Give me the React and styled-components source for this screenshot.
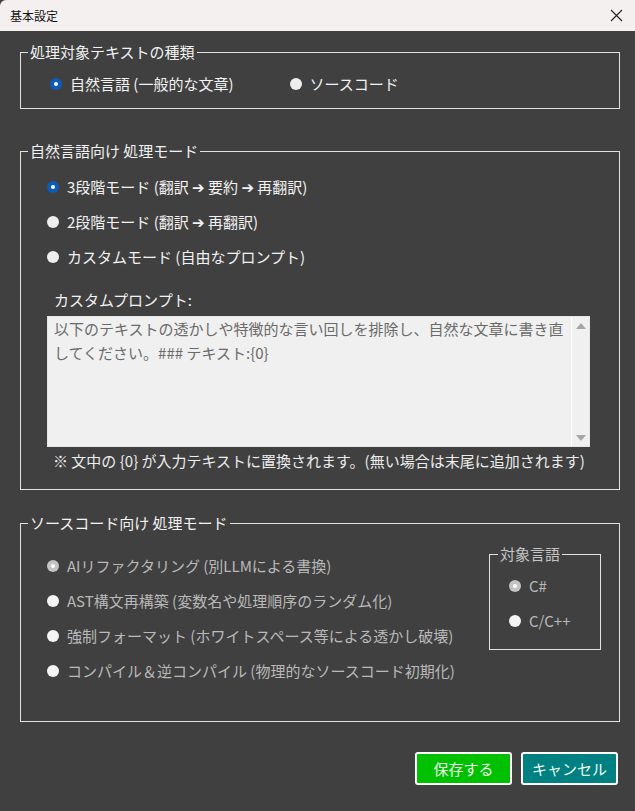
import React, { useState } from "react";
import styled, { createGlobalStyle } from "styled-components";

const GlobalStyle = createGlobalStyle`
  html, body {
    margin: 0;
    padding: 0;
    background: #404040;
  }
  * {
    box-sizing: border-box;
  }
`;

const FONT = `"Noto Sans CJK JP", "DejaVu Sans", sans-serif`;

function App() {
  const [textKind, setTextKind] = useState("natural");
  const [mode, setMode] = useState("three");
  const [prompt] = useState(
    "以下のテキストの透かしや特徴的な言い回しを排除し、自然な文章に書き直してください。### テキスト:{0}"
  );

  return (
    <Window>
      <GlobalStyle />
      <TitleBar>
        <Title>基本設定</Title>
        <CloseButton>
          <svg width="13" height="13" viewBox="0 0 13 13">
            <path d="M1 1 L12 12 M12 1 L1 12" stroke="#222" strokeWidth="1.1" />
          </svg>
        </CloseButton>
      </TitleBar>

      <Body>
        <Group $top={11} $pad="12px 0 14px 0">
          <Legend>処理対象テキストの種類</Legend>
          <GroupContent $inset={29}>
            <InlineOptions>
              <Option onClick={() => setTextKind("natural")}>
                <Radio $checked={textKind === "natural"} />
                自然言語 (一般的な文章)
              </Option>
              <Option onClick={() => setTextKind("source")}>
                <Radio $checked={textKind === "source"} />
                ソースコード
              </Option>
            </InlineOptions>
          </GroupContent>
        </Group>

        <Group $top={32} $pad="16px 0 18px 0">
          <Legend>自然言語向け 処理モード</Legend>
          <GroupContent $inset={26}>
            <OptionList $gap={15}>
              <Option onClick={() => setMode("three")}>
                <Radio $checked={mode === "three"} />
                3段階モード (翻訳 ➔ 要約 ➔ 再翻訳)
              </Option>
              <Option onClick={() => setMode("two")}>
                <Radio $checked={mode === "two"} />
                2段階モード (翻訳 ➔ 再翻訳)
              </Option>
              <Option onClick={() => setMode("custom")}>
                <Radio $checked={mode === "custom"} />
                カスタムモード (自由なプロンプト)
              </Option>
            </OptionList>
            <FieldLabel>カスタムプロンプト:</FieldLabel>
            <PromptBox>
              <PromptText>{prompt}</PromptText>
              <ScrollTrack>
                <Arrow $dir="up" />
                <Arrow $dir="down" />
              </ScrollTrack>
            </PromptBox>
            <Note>※ 文中の {"{0}"} が入力テキストに置換されます。(無い場合は末尾に追加されます)</Note>
          </GroupContent>
        </Group>

        <Group $top={23} $pad="23px 0 40px 0">
          <Legend>ソースコード向け 処理モード</Legend>
          <GroupContent $inset={26}>
            <SourceRow>
              <OptionList $gap={15}>
                <Option $disabled>
                  <Radio $checked $disabled />
                  AIリファクタリング (別LLMによる書換)
                </Option>
                <Option $disabled>
                  <Radio $disabled />
                  AST構文再構築 (変数名や処理順序のランダム化)
                </Option>
                <Option $disabled>
                  <Radio $disabled />
                  強制フォーマット (ホワイトスペース等による透かし破壊)
                </Option>
                <Option $disabled>
                  <Radio $disabled />
                  コンパイル＆逆コンパイル (物理的なソースコード初期化)
                </Option>
              </OptionList>
              <SubGroup>
                <SubLegend>対象言語</SubLegend>
                <GroupContent $inset={19}>
                  <OptionList $gap={15}>
                    <Option $disabled>
                      <Radio $checked $disabled />
                      C#
                    </Option>
                    <Option $disabled>
                      <Radio $disabled />
                      C/C++
                    </Option>
                  </OptionList>
                </GroupContent>
              </SubGroup>
            </SourceRow>
          </GroupContent>
        </Group>

        <ButtonRow>
          <ActionButton $bg="#00c000">保存する</ActionButton>
          <ActionButton $bg="#008080">キャンセル</ActionButton>
        </ButtonRow>
      </Body>
    </Window>
  );
}

const Window = styled.div`
  width: 635px;
  height: 811px;
  background: #404040;
  font-family: ${FONT};
  overflow: hidden;
`;

const TitleBar = styled.div`
  height: 31px;
  background: #f4f0f0;
  display: flex;
  align-items: center;
  justify-content: space-between;
  padding: 0 4px 0 10px;
  border-top-left-radius: 6px;
`;

const Title = styled.div`
  font-size: 12px;
  color: #111;
`;

const CloseButton = styled.div`
  width: 30px;
  display: flex;
  align-items: center;
  justify-content: center;
`;

const Body = styled.div`
  padding: 0 15px 0 20px;
`;

const Group = styled.fieldset`
  margin: ${(p) => p.$top}px 0 0 0;
  padding: ${(p) => p.$pad};
  border: 1px solid #e2e2e2;
  min-width: 0;
`;

const GroupContent = styled.div`
  padding-left: ${(p) => p.$inset}px;
`;

const Legend = styled.legend`
  margin-left: 7px;
  padding: 0 2px;
  font-size: 15px;
  line-height: 20px;
  color: #f2f2f2;
`;

const InlineOptions = styled.div`
  display: flex;
  gap: 56px;
`;

const OptionList = styled.div`
  display: flex;
  flex-direction: column;
  gap: ${(p) => p.$gap}px;
`;

const Option = styled.label`
  display: flex;
  align-items: center;
  gap: 8px;
  height: 20px;
  font-size: 15px;
  line-height: 20px;
  white-space: nowrap;
  color: ${(p) => (p.$disabled ? "#b9b9b9" : "#f2f2f2")};
  cursor: ${(p) => (p.$disabled ? "default" : "pointer")};
`;

const Radio = styled.span`
  flex: none;
  width: 12px;
  height: 12px;
  border-radius: 50%;
  position: relative;
  background: ${(p) =>
    p.$checked ? (p.$disabled ? "#c4c4c4" : "#0a5cb8") : p.$disabled ? "#f4f4f4" : "#eeeeee"};
  &::after {
    content: "";
    display: ${(p) => (p.$checked ? "block" : "none")};
    position: absolute;
    left: 4px;
    top: 4px;
    width: 4px;
    height: 4px;
    border-radius: 50%;
    background: #ffffff;
  }
`;

const FieldLabel = styled.div`
  margin: 23px 0 0 7px;
  font-size: 15px;
  line-height: 20px;
  color: #f2f2f2;
`;

const PromptBox = styled.div`
  margin-top: 6px;
  width: 543px;
  height: 131px;
  display: flex;
  background: #f0f0f0;
  border: 1px solid #e6e6e6;
`;

const PromptText = styled.div`
  flex: 1;
  padding: 0 6px;
  font-size: 15px;
  line-height: 24px;
  color: #6a6a6a;
`;

const ScrollTrack = styled.div`
  width: 18px;
  border-left: 1px solid #ffffff;
  display: flex;
  flex-direction: column;
  justify-content: space-between;
  align-items: center;
  padding: 6px 0 5px;
`;

const Arrow = styled.span`
  width: 0;
  height: 0;
  border-left: 5px solid transparent;
  border-right: 5px solid transparent;
  ${(p) =>
    p.$dir === "up"
      ? "border-bottom: 6px solid #a6a6a6;"
      : "border-top: 6px solid #a6a6a6;"}
`;

const Note = styled.div`
  margin: 4px 0 0 6px;
  font-size: 15px;
  line-height: 20px;
  color: #ececec;
  white-space: nowrap;
`;

const SourceRow = styled.div`
  display: flex;
  justify-content: space-between;
  align-items: flex-start;
  padding-right: 18px;
`;

const SubGroup = styled.fieldset`
  margin: -12px 0 0 0;
  width: 112px;
  height: 106px;
  padding: 12px 0 0 0;
  border: 1px solid #e2e2e2;
`;

const SubLegend = styled.legend`
  margin-left: 8px;
  padding: 0 2px;
  font-size: 15px;
  line-height: 20px;
  color: #c4c4c4;
`;

const ButtonRow = styled.div`
  margin-top: 30px;
  padding-right: 2px;
  display: flex;
  justify-content: flex-end;
  gap: 9px;
`;

const ActionButton = styled.button`
  width: 97px;
  height: 33px;
  border: 2px solid #ffffff;
  border-radius: 3px;
  background: ${(p) => p.$bg};
  color: #eefcee;
  font-family: ${FONT};
  font-size: 15px;
  padding: 0;
  cursor: pointer;
`;

export default App;
